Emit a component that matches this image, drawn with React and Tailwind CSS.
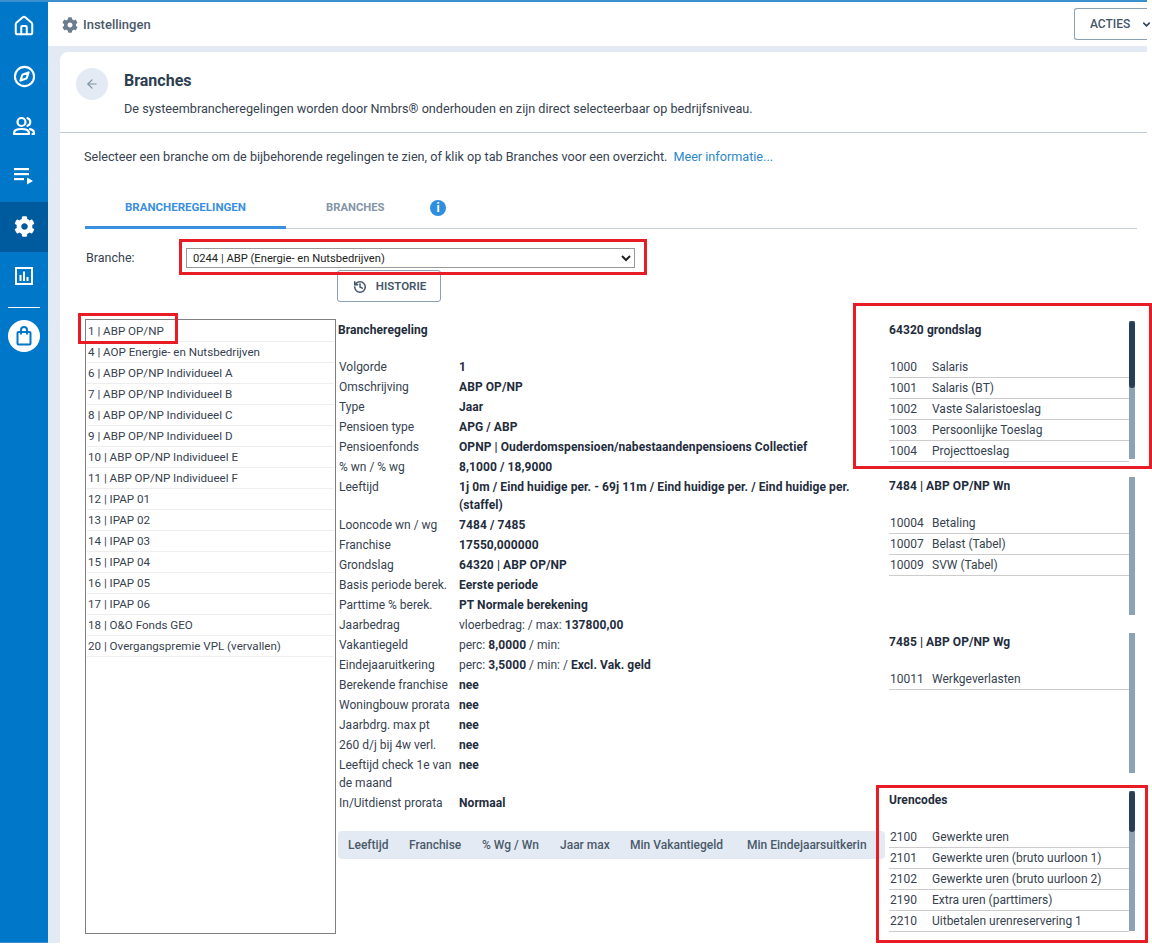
import React from 'react';
import { Home, Compass, ArrowLeft, History, ChevronDown } from 'lucide-react';
import { FaCog } from 'react-icons/fa';

const regelingen = [
  '1 | ABP OP/NP',
  '4 | AOP Energie- en Nutsbedrijven',
  '6 | ABP OP/NP Individueel A',
  '7 | ABP OP/NP Individueel B',
  '8 | ABP OP/NP Individueel C',
  '9 | ABP OP/NP Individueel D',
  '10 | ABP OP/NP Individueel E',
  '11 | ABP OP/NP Individueel F',
  '12 | IPAP 01',
  '13 | IPAP 02',
  '14 | IPAP 03',
  '15 | IPAP 04',
  '16 | IPAP 05',
  '17 | IPAP 06',
  '18 | O&O Fonds GEO',
  '20 | Overgangspremie VPL (vervallen)',
];

const B = ({ children }) => <b className="font-bold tracking-[0.08px] text-[#1f2d3d]">{children}</b>;

const details = [
  ['Volgorde', <B>1</B>],
  ['Omschrijving', <B>ABP OP/NP</B>],
  ['Type', <B>Jaar</B>],
  ['Pensioen type', <B>APG / ABP</B>],
  ['Pensioenfonds', <B>OPNP | Ouderdomspensioen/nabestaandenpensioens Collectief</B>],
  ['% wn / % wg', <B>8,1000 / 18,9000</B>],
  ['Leeftijd', <B>1j 0m / Eind huidige per. - 69j 11m / Eind huidige per. / Eind huidige per. (staffel)</B>],
  ['Looncode wn / wg', <B>7484 / 7485</B>],
  ['Franchise', <B>17550,000000</B>],
  ['Grondslag', <B>64320 | ABP OP/NP</B>],
  ['Basis periode berek.', <B>Eerste periode</B>],
  ['Parttime % berek.', <B>PT Normale berekening</B>],
  ['Jaarbedrag', <>vloerbedrag: / max: <B>137800,00</B></>],
  ['Vakantiegeld', <>perc: <B>8,0000</B> / min:</>],
  ['Eindejaaruitkering', <>perc: <B>3,5000</B> / min: / <B>Excl. Vak. geld</B></>],
  ['Berekende franchise', <B>nee</B>],
  ['Woningbouw prorata', <B>nee</B>],
  ['Jaarbdrg. max pt', <B>nee</B>],
  ['260 d/j bij 4w verl.', <B>nee</B>],
  ['Leeftijd check 1e van de maand', <B>nee</B>],
  ['In/Uitdienst prorata', <B>Normaal</B>],
];

const panels = [
  {
    title: '64320 grondslag',
    height: 'h-[138px]',
    thumb: 'h-[67px]',
    rows: [['1000', 'Salaris'], ['1001', 'Salaris (BT)'], ['1002', 'Vaste Salaristoeslag'], ['1003', 'Persoonlijke Toeslag'], ['1004', 'Projecttoeslag']],
  },
  {
    title: '7484 | ABP OP/NP Wn',
    height: 'h-[138px]',
    rows: [['10004', 'Betaling'], ['10007', 'Belast (Tabel)'], ['10009', 'SVW (Tabel)']],
  },
  {
    title: '7485 | ABP OP/NP Wg',
    height: 'h-[140px]',
    rows: [['10011', 'Werkgeverlasten']],
  },
  {
    title: 'Urencodes',
    height: 'h-[140px]',
    thumb: 'h-[41px]',
    rows: [['2100', 'Gewerkte uren'], ['2101', 'Gewerkte uren (bruto uurloon 1)'], ['2102', 'Gewerkte uren (bruto uurloon 2)'], ['2190', 'Extra uren (parttimers)'], ['2210', 'Uitbetalen urenreservering 1']],
  },
];

const UsersIcon = () => (
  <svg width="24" height="24" viewBox="0 0 24 24" fill="none" stroke="white" strokeWidth="2.2" strokeLinecap="round" strokeLinejoin="round">
    <circle cx="9.500" cy="8" r="4" />
    <path d="M2 20v-1c0-2.500 2.500-4 7.500-4s7.500 1.500 7.500 4v1z" />
    <path d="M15.500 4.200a4 4 0 0 1 0 7.600" />
    <path d="M18 15.200c2.500.5 4 1.800 4 3.800v1h-1.500" />
  </svg>
);

const QueueIcon = () => (
  <svg width="22" height="22" viewBox="0 0 22 22" fill="white">
    <rect x="1" y="3" width="15" height="2.200" />
    <rect x="1" y="8" width="15" height="2.200" />
    <rect x="1" y="13" width="10" height="2.200" />
    <path d="M14 12.500v7l6-3.500z" />
  </svg>
);

const ChartIcon = () => (
  <svg width="22" height="22" viewBox="0 0 22 22" fill="white">
    <path fillRule="evenodd" d="M2 2h18v18H2zM4 4v14h14V4z" />
    <rect x="6.500" y="10" width="2" height="6" />
    <rect x="10" y="6.500" width="2" height="9.500" />
    <rect x="13.500" y="12" width="2" height="4" />
  </svg>
);

const BagIcon = () => (
  <svg width="20" height="20" viewBox="0 0 20 20" fill="none" stroke="#0077c8" strokeWidth="2">
    <rect x="3.500" y="6" width="13" height="12.500" rx="1" />
    <path d="M7 8.500V4a3 3 0 0 1 6 0v4.500" />
  </svg>
);

const NavItem = ({ active, children }) => (
  <div className={`flex h-[50px] items-center justify-center pb-[2px] ${active ? 'bg-[#005a9e]' : ''}`}>{children}</div>
);

const Sidebar = () => (
  <div className="flex w-[48px] shrink-0 flex-col border-b border-[#3a8fcc] bg-[#0077c8]">
    <NavItem><Home size={22} color="white" strokeWidth={2.2} /></NavItem>
    <NavItem><Compass size={23} color="white" strokeWidth={2.2} /></NavItem>
    <NavItem><UsersIcon /></NavItem>
    <NavItem><QueueIcon /></NavItem>
    <NavItem active><FaCog size={21} color="white" /></NavItem>
    <NavItem><ChartIcon /></NavItem>
    <div className="mx-[8px] mt-[5px] h-px bg-white" />
    <div className="mx-auto mt-[12px] flex h-[32px] w-[32px] items-center justify-center rounded-full bg-white">
      <BagIcon />
    </div>
  </div>
);

const Panel = ({ title, height, thumb, rows }) => (
  <div className={`flex ${height}`}>
    <div className="flex-1">
      <div className="mb-[18px] leading-[18px] font-bold tracking-[0.08px] text-[#1f2d3d]">{title}</div>
      {rows.map(([code, name]) => (
        <div key={code} className="flex h-[21px] border-b border-[#cccccc] pl-px leading-[20px]">
          <span className="w-[42px] shrink-0">{code}</span>
          <span>{name}</span>
        </div>
      ))}
    </div>
    <div className="w-[6px] shrink-0 bg-[#8ca2b5]">
      {thumb && <div className={`${thumb} rounded-t-[3px] rounded-b-[3px] bg-[#263f58]`} />}
    </div>
  </div>
);

export default function App() {
  return (
    <div className="relative h-[944px] w-[1152px] overflow-hidden bg-white text-[12px] text-[#36424f] [font-family:Roboto,sans-serif]">
      <div className="h-[2px] w-[1147px] bg-[#3a8fcc]" />
      <div className="flex h-[941px] w-[1147px]">
        <Sidebar />

        <div className="flex min-w-0 flex-1 flex-col bg-[#e4eaf3]">
          {/* top bar */}
          <div className="flex h-[44px] shrink-0 items-center justify-between bg-white pl-[14px]">
            <div className="flex items-center gap-[5px] pt-[1px] text-[13px] font-medium text-[#4a5a6a]">
              <FaCog size={16} color="#6b7c8f" />
              Instellingen
            </div>
            <div className="flex h-[32px] w-[73px] items-center rounded-l-[3px] border border-r-0 border-[#8ba0b3] pl-[15px] text-[12px] font-medium text-[#44566a]">
              ACTIES
              <ChevronDown size={11} strokeWidth={3.5} className="ml-[11px] shrink-0 text-[#33475b]" />
            </div>
          </div>

          {/* card */}
          <div className="mt-[6px] ml-[12px] flex-1 rounded-tl-lg bg-white">
            <div className="flex h-[81px] border-b border-[#bccbd9] pt-[16px] pl-[16px]">
              <div className="flex h-[32px] w-[32px] items-center justify-center rounded-full bg-[#e4eaf3]">
                <ArrowLeft size={14} color="#7d8fa3" />
              </div>
              <div className="ml-[16px]">
                <div className="mt-[2px] text-[16px] leading-[22px] font-bold text-[#2d3e50]">Branches</div>
                <div className="mt-[8px] text-[12.650px] leading-[18px]">
                  De systeembrancheregelingen worden door Nmbrs® onderhouden en zijn direct selecteerbaar op bedrijfsniveau.
                </div>
              </div>
            </div>

            <div className="pr-[10px] pl-[25px]">
              <div className="-ml-px pt-[15px] text-[12.650px] leading-[18px]">
                Selecteer een branche om de bijbehorende regelingen te zien, of klik op tab Branches voor een overzicht.
                <span className="ml-[6px] text-[#2b88c8]">Meer informatie...</span>
              </div>

              {/* tabs */}
              <div className="mt-[20px] flex h-[43px] border-b border-[#c4d0db]">
                <div className="-mb-px flex w-[201px] items-center justify-center border-b-[3px] border-[#3b8fdf] pt-[4px] text-[11.500px] font-bold text-[#3b8fdf]">
                  BRANCHEREGELINGEN
                </div>
                <div className="ml-[40px] flex w-[59px] items-center pt-[3px] text-[11.250px] font-bold whitespace-nowrap text-[#8496a8]">BRANCHES</div>
                <div className="mt-[14px] ml-[45px] flex h-[16px] w-[16px] items-center justify-center rounded-full bg-[#2f8fdd] text-[12px] font-bold text-white">
                  i
                </div>
              </div>

              {/* branche select */}
              <div className="mt-[19px] flex h-[20px] items-center">
                <span className="ml-px w-[100px] pt-px text-[12.500px]">Branche:</span>
                <select
                  defaultValue="0244"
                  className="h-[20px] w-[449px] border border-[#999999] bg-white pl-[2px] text-[11.200px] text-[#222222] [appearance:auto]"
                >
                  <option value="0244">0244 | ABP (Energie- en Nutsbedrijven)</option>
                </select>
              </div>
              <div className="mt-[2px] ml-[252px] flex h-[32px] w-[104px] items-center justify-center gap-[9px] rounded-[3px] border border-[#8ba0b3] pt-px pl-px text-[11.500px] font-semibold text-[#44566a]">
                <History size={14} strokeWidth={2.6} />
                HISTORIE
              </div>

              {/* columns */}
              <div className="mt-[17px] flex">
                <div className="h-[615px] w-[251px] shrink-0 border border-[#808080] px-px pt-px text-[11.600px]">
                  {regelingen.map((r) => (
                    <div key={r} className="h-[21px] border-b border-[#eeeeee] pl-px leading-[21px]">{r}</div>
                  ))}
                </div>

                <div className="ml-[2px] w-[547px] shrink-0 pt-[2px]">
                  <div className="mb-[18px] leading-[18px] font-bold tracking-[0.08px] text-[#1f2d3d]">Brancheregeling</div>
                  {details.map(([label, value]) => (
                    <div key={label} className="flex py-px leading-[18px]">
                      <div className="w-[121px] shrink-0 pl-px">{label}</div>
                      <div className="w-[400px]">{value}</div>
                    </div>
                  ))}
                  <div className="mt-[18px] flex h-[28px] items-center rounded-[4px] bg-[#e4eaf3] pl-[10px] font-medium whitespace-nowrap text-[#4a5a6a]">
                    <span className="w-[61px] shrink-0">Leeftijd</span>
                    <span className="w-[73px] shrink-0">Franchise</span>
                    <span className="w-[78px] shrink-0">% Wg / Wn</span>
                    <span className="w-[70px] shrink-0">Jaar max</span>
                    <span className="w-[117px] shrink-0">Min Vakantiegeld</span>
                    <span>Min Eindejaarsuitkerin</span>
                  </div>
                </div>

                <div className="ml-[4px] flex w-[246px] shrink-0 flex-col gap-[18px] pt-[2px]">
                  {panels.map((p) => (
                    <Panel key={p.title} {...p} />
                  ))}
                </div>
              </div>
            </div>
          </div>
        </div>
      </div>

      {/* red annotation boxes */}
      <div className="absolute top-[239px] left-[179px] h-[36px] w-[468px] border-[3px] border-[#e81c24]" />
      <div className="absolute top-[313px] left-[78px] h-[31px] w-[100px] border-[3px] border-[#e81c24]" />
      <div className="absolute top-[303px] left-[853px] h-[166px] w-[299px] border-[3px] border-[#e81c24]" />
      <div className="absolute top-[785px] left-[876px] h-[158px] w-[272px] border-[3px] border-[#e81c24]" />
    </div>
  );
}
